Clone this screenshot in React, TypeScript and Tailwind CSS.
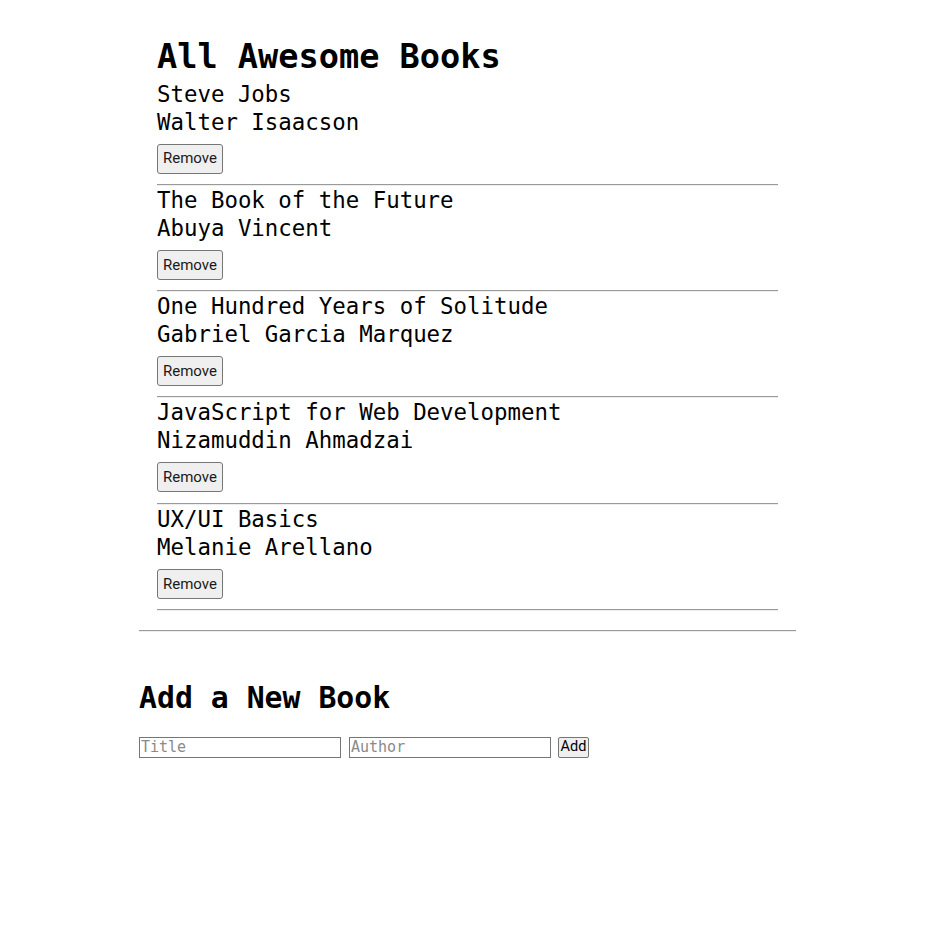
import { useState } from 'react'

type Book = {
  id: number
  title: string
  author: string
}

const INITIAL_BOOKS: Book[] = [
  { id: 1, title: 'Steve Jobs', author: 'Walter Isaacson' },
  { id: 2, title: 'The Book of the Future', author: 'Abuya Vincent' },
  { id: 3, title: 'One Hundred Years of Solitude', author: 'Gabriel Garcia Marquez' },
  { id: 4, title: 'JavaScript for Web Development', author: 'Nizamuddin Ahmadzai' },
  { id: 5, title: 'UX/UI Basics', author: 'Melanie Arellano' },
]

const MONO = "font-['DejaVu_Sans_Mono',monospace]"

function Rule({ className = '' }: { className?: string }) {
  return <div className={`h-[2px] border-t border-b border-t-[#9a9a9a] border-b-[#eeeeee] ${className}`} />
}

export default function App() {
  const [books, setBooks] = useState<Book[]>(INITIAL_BOOKS)
  const [title, setTitle] = useState('')
  const [author, setAuthor] = useState('')

  const addBook = (e: React.FormEvent) => {
    e.preventDefault()
    if (!title || !author) return
    setBooks((prev) => [...prev, { id: Date.now(), title, author }])
    setTitle('')
    setAuthor('')
  }

  return (
    <main className={`mx-auto w-[657px] bg-white text-black ${MONO}`}>
      <section className="ml-[18px] w-[621px] pt-[40px]">
        <h1 className="mb-[6px] text-[33.6px] font-bold leading-none">All Awesome Books</h1>

        <ul>
          {books.map((book) => (
            <li key={book.id}>
              <p className="text-[22.4px] leading-[28px]">{book.title}</p>
              <p className="text-[22.4px] leading-[28px]">{book.author}</p>
              <button
                className="mt-[8px] mb-[10.3px] h-[30px] rounded-[3px] border border-[#767676] bg-[#efefef] px-[5px] font-['Roboto',sans-serif] text-[15px] text-[#1a1a1a]"
                onClick={() => setBooks((prev) => prev.filter((b) => b.id !== book.id))}
              >
                Remove
              </button>
              <Rule />
            </li>
          ))}
        </ul>
      </section>

      <Rule className="mt-[19px]" />

      <section className="pt-[51px]">
        <h2 className="text-[29.8px] font-bold leading-none">Add a New Book</h2>

        <form className="mt-[24px] flex items-center gap-[8px]" onSubmit={addBook}>
          <input
            className={`h-[21px] w-[202px] border border-[#767676] px-[1px] text-[15px] leading-none placeholder:text-[#8a8a8a] ${MONO}`}
            placeholder="Title"
            value={title}
            onChange={(e) => setTitle(e.target.value)}
          />
          <input
            className={`h-[21px] w-[202px] border border-[#767676] px-[1px] text-[15px] leading-none placeholder:text-[#8a8a8a] ${MONO}`}
            placeholder="Author"
            value={author}
            onChange={(e) => setAuthor(e.target.value)}
          />
          <button
            type="submit"
            className="ml-[-1px] h-[21px] w-[31px] rounded-[2px] border border-[#767676] bg-[#efefef] px-0 font-['Roboto',sans-serif] text-[14.5px] leading-none text-black"
          >
            Add
          </button>
        </form>
      </section>
    </main>
  )
}
